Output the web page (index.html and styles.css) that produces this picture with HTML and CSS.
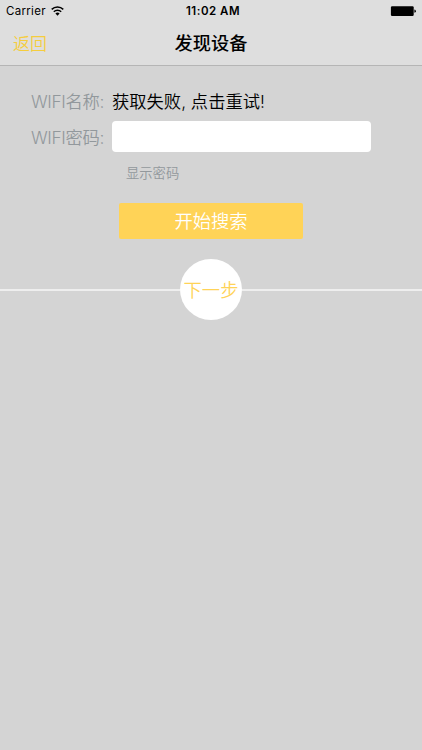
FILE: index.html
```html
<!DOCTYPE html>
<html lang="zh-CN">
<head>
  <meta charset="UTF-8">
  <title>发现设备</title>
  <meta name="viewport" content="width=device-width, initial-scale=1.0">
  <link rel="stylesheet" href="styles.css">
</head>
<body>
  <header>
    <div class="status">
      <div class="carrier">
        <span>Carrier</span>
        <svg class="wifi" viewBox="0 0 13 10">
          <path d="M0.7 3.4a8.3 8.3 0 0 1 11.6 0" />
          <path d="M2.8 5.7a5.3 5.3 0 0 1 7.4 0" />
          <path class="dot" d="M4.4 7.5a3 3 0 0 1 4.2 0L6.5 9.7z" />
        </svg>
      </div>
      <span class="time">11:02 AM</span>
      <svg class="battery" viewBox="0 0 26 11">
        <rect x="0.9" y="0.2" width="22.8" height="9.8" rx="1.2" />
        <path d="M24.4 3.6q1.5 .3 1.5 1.6t-1.5 1.6z" />
      </svg>
    </div>
    <nav>
      <a class="back" href="#">返回</a>
      <h1>发现设备</h1>
    </nav>
  </header>

  <main>
    <div class="row">
      <span class="label">WIFI名称:</span>
      <span class="ssid">获取失败, 点击重试!</span>
    </div>
    <div class="row">
      <label class="label" for="password">WIFI密码:</label>
      <input id="password" type="password">
    </div>
    <div class="show-password">显示密码</div>
    <button class="search-btn">开始搜索</button>
    <div class="next">
      <button class="next-btn">下一步</button>
    </div>
  </main>
</body>
</html>
```

FILE: styles.css
```css
:root {
  --bg: #d4d4d4;
  --header: #dedede;
  --label: #92989c;
  --yellow: #ffd357;
}

* {
  box-sizing: border-box;
}

body {
  margin: 0;
  min-height: 100vh;
  background: var(--bg);
  color: #000;
  font-family: Inter, "Noto Sans CJK SC", sans-serif;
}

header {
  height: 66px;
  background: var(--header);
  border-bottom: 1px solid #b5b5b5;
}

.status {
  display: grid;
  grid-template-columns: 1fr auto 1fr;
  align-items: center;
  height: 22px;
  padding: 0 6px;
  font-size: 11.5px;
}

.carrier {
  display: flex;
  align-items: center;
  gap: 5px;
  letter-spacing: 0.3px;
}

.wifi {
  width: 13px;
  height: 10px;
  margin-bottom: 1px;
  fill: none;
  stroke: #000;
  stroke-width: 1.5;
}

.wifi .dot {
  fill: #000;
  stroke: none;
}

.time {
  padding-left: 4px;
  font-weight: 600;
  letter-spacing: 0.5px;
}

.battery {
  width: 26px;
  height: 11px;
  justify-self: end;
}

nav {
  display: grid;
  grid-template-columns: 1fr auto 1fr;
  align-items: center;
  height: 40px;
  padding: 0 13px;
}

.back {
  color: #f5cd3d;
  font-size: 17px;
  font-weight: 350;
  text-decoration: none;
}

h1 {
  margin: 0;
  font-size: 18.2px;
  font-weight: 500;
}

main {
  display: flex;
  flex-direction: column;
  align-items: center;
  padding-top: 19px;
}

.row {
  display: flex;
  align-items: center;
  align-self: flex-start;
  height: 31px;
  margin-bottom: 5px;
  padding-left: 31px;
  font-size: 17.3px;
  font-weight: 350;
}

.label {
  width: 81px;
  color: var(--label);
  letter-spacing: -0.35px;
  white-space: nowrap;
}

input {
  width: 259px;
  height: 31px;
  border: none;
  border-radius: 4px;
  background: #fff;
}

.show-password {
  align-self: flex-start;
  margin: 6px 0 0 126px;
  color: var(--label);
  font-size: 13.3px;
  font-weight: 350;
  line-height: 20px;
}

button {
  padding: 0;
  border: none;
  font-family: inherit;
  font-size: 18.3px;
  font-weight: 350;
}

.search-btn {
  width: 184px;
  height: 36px;
  margin-top: 20px;
  padding-bottom: 2px;
  border-radius: 2px;
  background: var(--yellow);
  color: #fff;
}

.next {
  display: flex;
  align-items: center;
  width: 100%;
  margin-top: 20px;
}

.next::before,
.next::after {
  content: "";
  flex: 1;
  height: 2px;
  background: #eee;
}

.next-btn {
  width: 62px;
  height: 61px;
  padding-bottom: 2px;
  border-radius: 50%;
  background: #fff;
  color: var(--yellow);
}
```
